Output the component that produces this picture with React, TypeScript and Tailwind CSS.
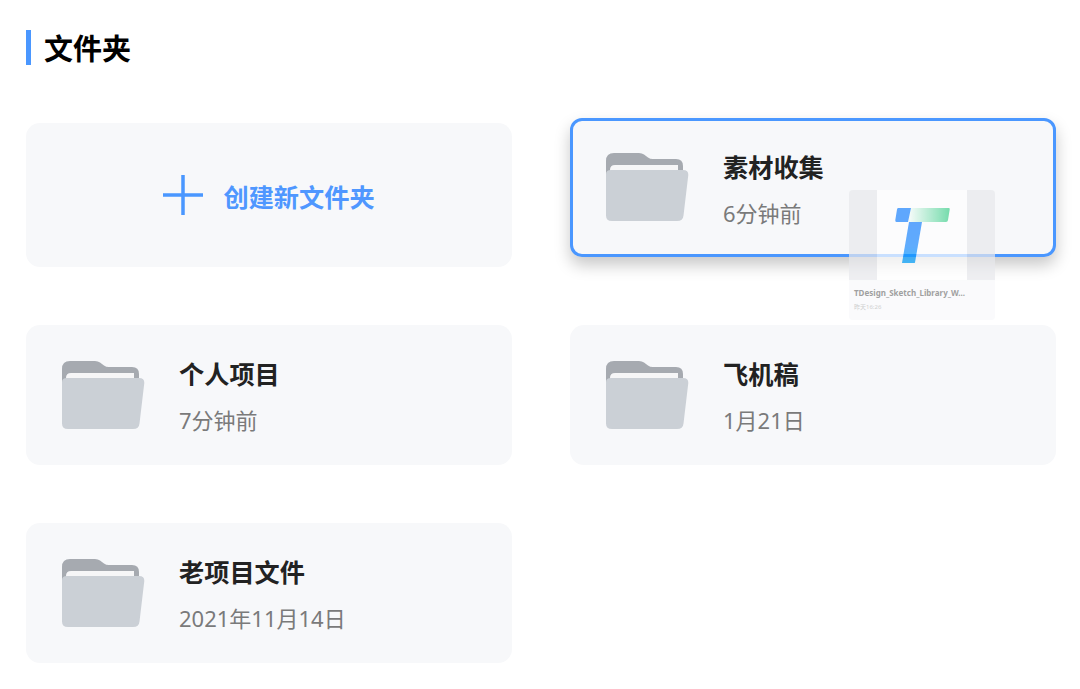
function FolderIcon() {
  return (
    <svg width="83" height="69" viewBox="0 0 83 69" className="shrink-0">
      <path d="M0 8Q0 0 8 0H33Q36 0 38 1.500L42 4.500Q44 6 47 6H70Q77 6 77 13V25H0Z" fill="#a6aab0" />
      <path d="M4 17Q4 12 9 12H72V20H4Z" fill="#f6f6f7" />
      <path d="M0 21Q0 17 5 17H77Q82.500 17 82.300 22L77.500 62.500Q77 68 71 68H6Q0 68 0 62.500Z" fill="#cbd0d6" />
    </svg>
  );
}

function FolderText({ name, time }: { name: string; time: string }) {
  return (
    <div className="mt-[4px] flex flex-col gap-[10px]">
      <div className="text-[25.2px] leading-[36px] font-bold text-[#222222]">{name}</div>
      <div className="text-[22px] leading-[36px] text-[#7a7a7a]">{time}</div>
    </div>
  );
}

function FolderCard({ name, time }: { name: string; time: string }) {
  return (
    <div className="h-[140px] rounded-[14px] bg-[#f7f8fa] pl-[36px] flex items-center gap-[34px]">
      <FolderIcon />
      <FolderText name={name} time={time} />
    </div>
  );
}

function DragThumb() {
  return (
    <div className="absolute left-[849px] top-[190px] w-[146px] h-[130px] rounded-[4px] overflow-hidden bg-[#f8f9fb] opacity-70 flex flex-col">
      <div className="h-[90px] shrink-0 bg-[#e8e9ed] flex justify-center">
        <div className="w-[90px] h-full bg-white relative">
          <svg width="90" height="90" viewBox="0 0 90 90" className="absolute left-0 top-0">
            <defs>
              <linearGradient id="tbar" x1="0" x2="1" y1="0" y2="0">
                <stop offset="0" stopColor="#ffffff" />
                <stop offset="1" stopColor="#3fd08c" />
              </linearGradient>
              <linearGradient id="tstem" x1="0" x2="0" y1="0" y2="1">
                <stop offset="0" stopColor="#1f85ff" />
                <stop offset="0.6" stopColor="#1f8cff" />
                <stop offset="1" stopColor="#00a4ff" />
              </linearGradient>
            </defs>
            <path d="M33 18H72Q73 18 72.700 19.500L71 30Q70.800 32 69 32H30Z" fill="url(#tbar)" />
            <path d="M21 18H34L31 32H19.500Q18 32 18.300 30L20 19.500Q20.200 18 21 18Z" fill="#1f85ff" />
            <path d="M32 32H45L38 72.500Q37.800 73 37 73H25Z" fill="url(#tstem)" />
          </svg>
        </div>
      </div>
      <div className="px-[5px] pt-[8px] text-[8px] leading-[10px] font-bold text-[#777777] whitespace-nowrap">
        TDesign_Sketch_Library_W...
      </div>
      <div className="px-[5px] pt-[5px] text-[6px] leading-[8px] text-[#bbbbbb]">昨天16:26</div>
    </div>
  );
}

export default function App() {
  return (
    <div className="relative h-[689px] w-[1080px] overflow-hidden bg-white pl-[26px] pt-[30px] font-['Noto_Sans','Noto_Sans_CJK_SC',sans-serif]">
      <div className="flex h-[35px] items-center gap-[13px]">
        <div className="h-[35px] w-[5px] bg-[#4a97ff]" />
        <div className="mt-[3px] text-[29px] leading-[40px] font-bold text-black">文件夹</div>
      </div>
      <div className="mt-[58px] grid grid-cols-[486px_486px] gap-x-[58px] gap-y-[58px]">
        <div className="h-[144px] rounded-[14px] bg-[#f7f8fa] flex items-center justify-center gap-[20px]">
          <svg width="40" height="40" viewBox="0 0 40 40" className="shrink-0">
            <path d="M0 20H40M20 0V40" stroke="#4a97ff" strokeWidth="3.500" fill="none" />
          </svg>
          <div className="mt-[3px] text-[25.2px] leading-[36px] font-bold text-[#4f97ff]">创建新文件夹</div>
        </div>
        <div className="-mt-[5px] h-[139px] self-start rounded-[12px] border-[3px] border-[#4a97ff] bg-[#f7f8fa] pl-[33px] flex items-center gap-[34px] shadow-[0_8px_16px_rgba(0,0,0,0.22)]">
          <FolderIcon />
          <FolderText name="素材收集" time="6分钟前" />
        </div>
        <FolderCard name="个人项目" time="7分钟前" />
        <FolderCard name="飞机稿" time="1月21日" />
        <FolderCard name="老项目文件" time="2021年11月14日" />
      </div>
      <DragThumb />
    </div>
  );
}
